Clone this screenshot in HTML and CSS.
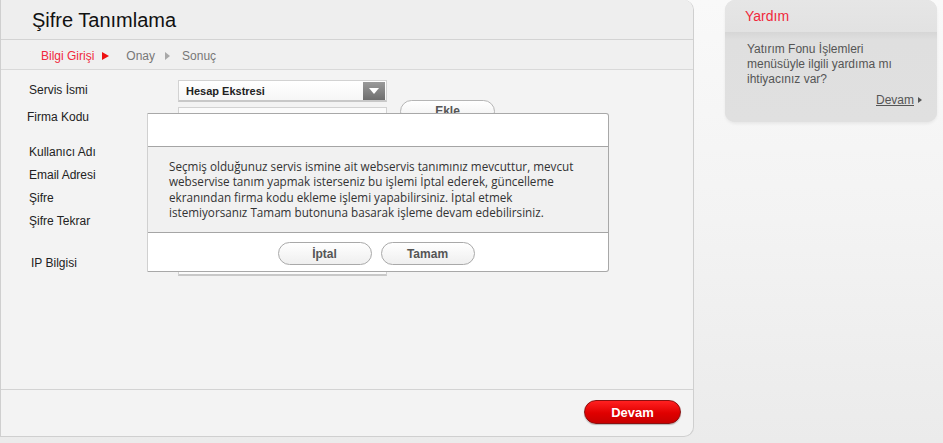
FILE: index.html
```html
<!DOCTYPE html>
<html lang="tr">
<head>
<meta charset="utf-8">
<title>Şifre Tanımlama</title>
<link rel="stylesheet" href="styles.css">
</head>
<body>
<div class="page">
  <div class="main">
    <div class="header"><h1 class="title">Şifre Tanımlama</h1></div>
    <div class="crumbs">
      <span class="crumb active">Bilgi Girişi</span>
      <span class="tri red"></span>
      <span class="crumb">Onay</span>
      <span class="tri gray"></span>
      <span class="crumb">Sonuç</span>
    </div>
    <div class="form">
      <div class="row r1">
        <div class="label">Servis İsmi</div>
        <div class="select"><span class="select-text">Hesap Ekstresi</span><span class="arrow"></span></div>
      </div>
      <div class="row r2">
        <div class="label l2">Firma Kodu</div>
        <div class="input"></div>
        <div class="btn-ekle">Ekle</div>
      </div>
      <div class="label-list">
        <div class="ll">Kullanıcı Adı</div>
        <div class="ll">Email Adresi</div>
        <div class="ll">Şifre</div>
        <div class="ll">Şifre Tekrar</div>
      </div>
      <div class="row r-ip">
        <div class="label">IP Bilgisi</div>
        <div class="input ip"></div>
      </div>
    </div>
    <div class="footer">
      <button class="btn-devam">Devam</button>
    </div>

    <div class="modal">
      <div class="modal-head"></div>
      <div class="modal-body">Seçmiş olduğunuz servis ismine ait webservis tanımınız mevcuttur, mevcut<br>webservise tanım yapmak isterseniz bu işlemi İptal ederek, güncelleme<br>ekranından firma kodu ekleme işlemi yapabilirsiniz. İptal etmek<br>istemiyorsanız Tamam butonuna basarak işleme devam edebilirsiniz.</div>
      <div class="modal-foot">
        <button class="mbtn">İptal</button>
        <button class="mbtn">Tamam</button>
      </div>
    </div>
  </div>

  <div class="side">
    <div class="help">
      <div class="help-head">Yardım</div>
      <div class="help-body">
        <p class="help-text">Yatırım Fonu İşlemleri<br>menüsüyle ilgili yardıma mı<br>ihtiyacınız var?</p>
        <div class="help-link"><span class="link">Devam</span><span class="tri small"></span></div>
      </div>
    </div>
  </div>
</div>
</body>
</html>
```

FILE: styles.css
```css
html, body {
  margin: 0;
  padding: 0;
}
body {
  width: 943px;
  height: 443px;
  overflow: hidden;
  background: linear-gradient(to bottom, #f9f9f9 0%, #f3f3f3 50%, #ebebeb 100%);
  font-family: "Liberation Sans", Arial, sans-serif;
  color: #333;
}
.page {
  display: flex;
  align-items: flex-start;
}
.main {
  position: relative;
  width: 694px;
  height: 437px;
  box-sizing: border-box;
  border: 1px solid #cfcfcf;
  border-top: none;
  border-radius: 0 10px 10px 0;
  background: #f3f3f3;
  display: flex;
  flex-direction: column;
}
.header {
  height: 40px;
  box-sizing: border-box;
  border-bottom: 1px solid #d3d3d3;
  background: #eeeeee;
  border-top-right-radius: 10px;
}
.title {
  margin: 0;
  padding-left: 31px;
  font-size: 20px;
  font-weight: normal;
  line-height: 40px;
  color: #111;
}
.crumbs {
  height: 30px;
  box-sizing: border-box;
  border-bottom: 1px solid #d9d9d9;
  background: #f0f0f0;
  display: flex;
  align-items: center;
  padding: 2px 0 0 40px;
  font-size: 12px;
}
.crumb { color: #777; }
.crumb.active { color: #f0283c; }
.tri {
  width: 0;
  height: 0;
  border-top: 4px solid transparent;
  border-bottom: 4px solid transparent;
}
.tri.red {
  border-left: 7px solid #ee1111;
  margin: 1px 17px 0 8px;
}
.tri.gray {
  border-left: 5px solid #a8a8a8;
  margin: 1px 12px 0 10px;
}
.form {
  flex: 1;
  padding: 11px 0 0 28px;
}
.row {
  display: flex;
  align-items: flex-start;
}
.label {
  width: 149px;
  font-size: 12px;
  line-height: 18px;
  color: #222;
}
.r1 .select { margin-top: -1px; }
.select {
  width: 209px;
  height: 22px;
  box-sizing: border-box;
  border: 1px solid #d2d2d2;
  border-bottom: 2px solid #c8c8c8;
  background: linear-gradient(#ffffff, #f6f6f6);
  display: flex;
  align-items: center;
  justify-content: space-between;
  padding: 0 1px 0 7px;
}
.select-text {
  font-size: 11px;
  font-weight: bold;
  color: #222;
}
.arrow {
  width: 22px;
  height: 18px;
  background: linear-gradient(#9a9a9a, #6e6e6e);
  position: relative;
}
.arrow::after {
  content: "";
  position: absolute;
  left: 6px;
  top: 6px;
  border-left: 5px solid transparent;
  border-right: 5px solid transparent;
  border-top: 6px solid #fff;
}
.r2 { margin-top: 5px; }
.l2 { margin: 3px 2px 0 -2px; line-height: 14px; }
.input {
  width: 209px;
  height: 22px;
  box-sizing: border-box;
  border: 1px solid #d2d2d2;
  border-bottom: 2px solid #c8c8c8;
  background: #fbfbfb;
}
.btn-ekle {
  margin: -7px 0 0 13px;
  width: 95px;
  height: 23px;
  box-sizing: border-box;
  border: 1px solid #b5b5b5;
  border-radius: 12px;
  background: linear-gradient(#ffffff, #eeeeee);
  text-align: center;
  font-size: 12px;
  font-weight: bold;
  line-height: 21px;
  color: #555;
}
.label-list {
  margin-top: 12px;
}
.ll {
  font-size: 12px;
  line-height: 23px;
  color: #222;
}
.r-ip {
  margin-top: 17px;
  align-items: center;
}
.r-ip .label { margin-left: 2px; margin-right: -2px; }
.input.ip { margin-top: 4px; }
.footer {
  height: 47px;
  box-sizing: border-box;
  border-top: 1px solid #d3d3d3;
  display: flex;
  justify-content: flex-end;
  align-items: flex-start;
  padding: 10px 12px 0 0;
}
.btn-devam {
  width: 97px;
  height: 24px;
  border: 1px solid #8a1010;
  border-radius: 12px;
  background: linear-gradient(#ff2020, #e00000 55%, #c80000);
  color: #fff;
  font-family: "Liberation Sans", Arial, sans-serif;
  font-size: 13px;
  font-weight: bold;
  padding: 0;
  box-shadow: 0 1px 1px rgba(0,0,0,0.25);
}
.modal {
  position: absolute;
  left: 146px;
  top: 113px;
  width: 462px;
  height: 159px;
  box-sizing: border-box;
  background: #fff;
  border: 1px solid #a8a8a8;
  border-left-color: #d0d0d0;
  border-radius: 0 3px 3px 0;
  display: flex;
  flex-direction: column;
  z-index: 5;
}
.modal-head {
  height: 32px;
  border-bottom: 1px solid #a5a5a5;
}
.modal-body {
  height: 86px;
  box-sizing: border-box;
  background: #f1f1f1;
  border-bottom: 1px solid #a5a5a5;
  padding: 12px 0 0 21px;
  font-family: "Open Sans", "Noto Sans", sans-serif;
  font-size: 11.7px;
  line-height: 15.33px;
  color: #333;
  white-space: nowrap;
}
.modal-foot {
  flex: 1;
  display: flex;
  justify-content: center;
  align-items: flex-start;
  gap: 9px;
  padding: 9px 4px 0 0;
}
.mbtn {
  width: 94px;
  height: 23px;
  border: 1px solid #a9a9a9;
  border-radius: 12px;
  background: linear-gradient(#ffffff, #efefef);
  font-family: "Liberation Sans", Arial, sans-serif;
  font-size: 12px;
  font-weight: bold;
  color: #555;
  padding: 0;
}
.side {
  margin-left: 31px;
  width: 212px;
}
.help {
  height: 122px;
  border-radius: 10px;
  background: #dedede;
  overflow: hidden;
  box-shadow: 0 2px 3px rgba(0,0,0,0.06);
}
.help-head {
  height: 32px;
  box-sizing: border-box;
  padding-left: 20px;
  line-height: 32px;
  font-size: 14px;
  color: #f0283c;
  background: linear-gradient(#e6e6e6, #e2e2e2);
}
.help-body {
  background: linear-gradient(#d6d6d6 0px, #dfdfdf 8px, #e0e0e0 100%);
  height: 90px;
  padding: 10px 0 0 22px;
  box-sizing: border-box;
}
.help-text {
  margin: 0;
  font-size: 12px;
  line-height: 15px;
  color: #555;
}
.help-link {
  display: flex;
  justify-content: flex-end;
  align-items: center;
  padding-right: 15px;
  margin-top: 6px;
  font-size: 12px;
  color: #555;
}
.link { text-decoration: underline; }
.tri.small {
  border-top: 3.5px solid transparent;
  border-bottom: 3.5px solid transparent;
  border-left: 4px solid #555;
  margin-left: 4px;
}
```
